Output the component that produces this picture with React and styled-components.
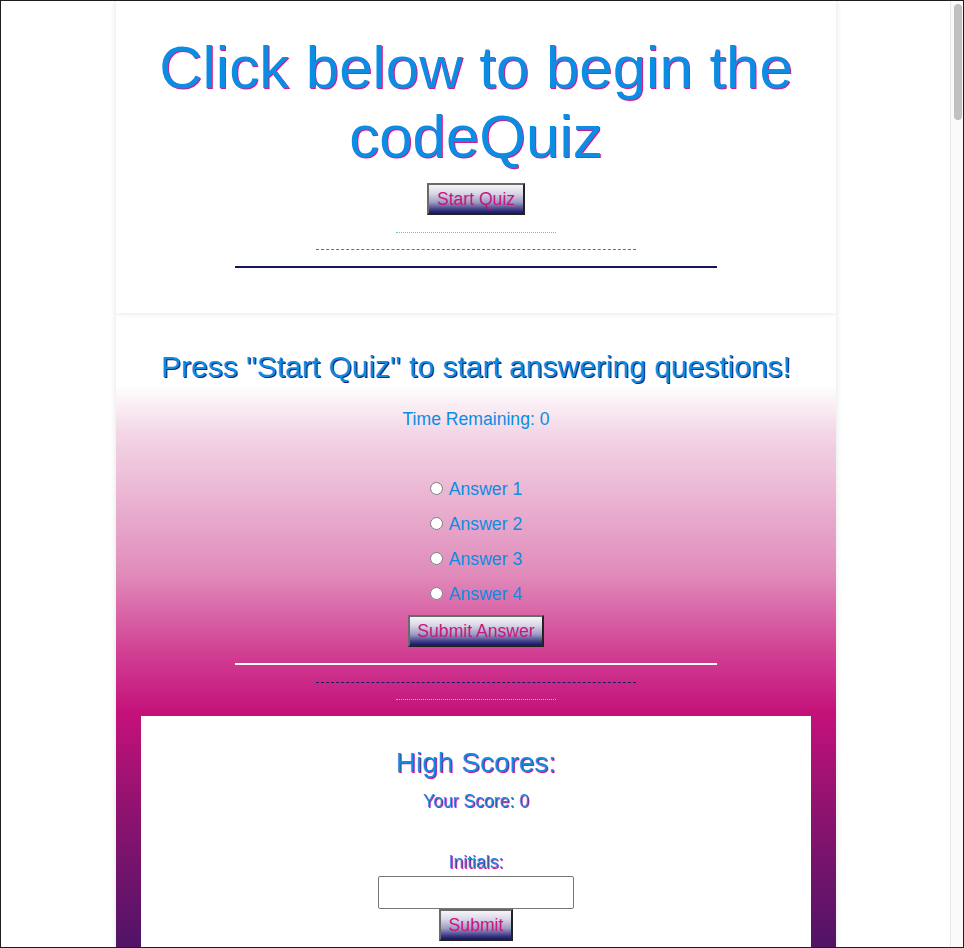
import React from "react";
import styled, { createGlobalStyle } from "styled-components";

const BLUE = "#0a8de2";
const MAGENTA = "#c8157f";

const GlobalStyle = createGlobalStyle`
  html, body {
    margin: 0;
    padding: 0;
    background: #ffffff;
  }
  body {
    font-family: "Liberation Sans", Arial, Helvetica, sans-serif;
    color: ${BLUE};
    padding-right: 12px;
  }
`;

const Frame = styled.div`
  position: fixed;
  inset: 0;
  border: 1px solid #1e1e1e;
  pointer-events: none;
  z-index: 10;
`;

const ScrollTrack = styled.div`
  position: fixed;
  top: 0;
  right: 0;
  bottom: 0;
  width: 13px;
  background: #fafafa;
  border-left: 1px solid #e6e6e6;
  z-index: 9;
`;

const ScrollThumb = styled.div`
  margin: 4px 0 0 3px;
  width: 8px;
  height: 116px;
  border-radius: 4px;
  background: #c1c1c1;
`;

const Page = styled.main`
  width: 720px;
  margin: 0 auto;
`;

const IntroCard = styled.section`
  position: relative;
  z-index: 1;
  background: #ffffff;
  box-shadow: 0 0 6px rgba(0, 0, 0, 0.12);
  padding: 33px 0 45px;
  display: flex;
  flex-direction: column;
  align-items: center;
  text-align: center;
`;

const Title = styled.h1`
  margin: 0;
  font-size: 60px;
  font-weight: normal;
  line-height: 69px;
  color: ${BLUE};
  text-shadow: 1px 1px 0 #d8198c;
`;

const QuizButton = styled.button`
  margin-top: ${(p) => p.$gap ?? 0}px;
  font-family: "Liberation Sans", Arial, Helvetica, sans-serif;
  font-size: 17.6px;
  line-height: 20px;
  color: ${MAGENTA};
  padding: 4px 7.5px;
  border: 2px solid;
  border-color: #6a6a6a #222222 #222222 #6a6a6a;
  border-radius: 0;
  background: linear-gradient(
    to bottom,
    #f6f4f9 0%,
    #d9d7e6 30%,
    #9d9cc3 62%,
    #3c3b86 88%,
    #1a1962 100%
  );
  cursor: pointer;
`;

const Rule = styled.hr`
  width: ${(p) => p.$w}px;
  margin: ${(p) => p.$gap}px auto 0;
  border: 0;
  border-top: ${(p) => p.$thick}px ${(p) => p.$kind} ${(p) => p.$color};
  height: 0;
`;

const QuizCard = styled.section`
  background: linear-gradient(
    to bottom,
    #ffffff 0px,
    #ffffff 72px,
    #f3d6e6 120px,
    #e08cbb 260px,
    #d13f93 340px,
    #c4117a 400px,
    #8d136f 500px,
    #4d1466 640px,
    #4a1465 100%
  );
  box-shadow: 0 0 6px rgba(0, 0, 0, 0.12);
  padding: 36px 25px 0;
  display: flex;
  flex-direction: column;
  align-items: center;
  text-align: center;
`;

const Prompt = styled.h2`
  margin: 0;
  font-size: 30px;
  font-weight: normal;
  line-height: 35px;
  color: ${BLUE};
  text-shadow: 1px 1px 0 #1c1f72;
`;

const Timer = styled.p`
  margin: 25px 0 0;
  font-size: 17.6px;
  line-height: 20px;
`;

const AnswerList = styled.div`
  margin-top: 50px;
  display: flex;
  flex-direction: column;
  align-items: center;
  gap: 15px;
`;

const AnswerRow = styled.label`
  display: flex;
  align-items: center;
  gap: 6px;
  font-size: 17.6px;
  line-height: 20px;
  color: ${BLUE};
  cursor: pointer;
`;

const Radio = styled.input`
  margin: 0 0 2px;
  width: 13px;
  height: 13px;
`;

const ScoresCard = styled.div`
  align-self: stretch;
  margin-top: 16px;
  background: #ffffff;
  padding: 31px 0 60px;
  display: flex;
  flex-direction: column;
  align-items: center;
  text-align: center;
`;

const ScoresTitle = styled.h3`
  margin: 0;
  font-size: 28px;
  font-weight: normal;
  line-height: 32px;
  color: ${BLUE};
  text-shadow: 1px 1px 0 #d8198c;
`;

const ScoreText = styled.p`
  margin: ${(p) => p.$gap}px 0 0;
  font-size: 17.6px;
  line-height: 20px;
  color: ${BLUE};
  text-shadow: 1px 1px 0 #d8198c;
`;

const InitialsInput = styled.input`
  margin-top: 4px;
  box-sizing: border-box;
  width: 196px;
  height: 33px;
  border: 1px solid #767676;
  border-radius: 2px;
  padding: 1px 4px;
  font-family: "Liberation Sans", Arial, sans-serif;
  font-size: 16px;
  background: #ffffff;
`;

const answers = ["Answer 1", "Answer 2", "Answer 3", "Answer 4"];

export default function App() {
  return (
    <>
      <GlobalStyle />
      <Frame />
      <ScrollTrack>
        <ScrollThumb />
      </ScrollTrack>
      <Page>
        <IntroCard>
          <Title>
            Click below to begin the
            <br />
            codeQuiz
          </Title>
          <QuizButton $gap={12}>Start Quiz</QuizButton>
          <Rule $w={160} $gap={17} $thick={1} $kind="dotted" $color="#5bc3dc" />
          <Rule $w={320} $gap={16} $thick={1} $kind="dashed" $color="#e21ee0" />
          <Rule $w={482} $gap={16} $thick={2} $kind="solid" $color="#15155c" />
        </IntroCard>
        <QuizCard>
          <Prompt>Press "Start Quiz" to start answering questions!</Prompt>
          <Timer>Time Remaining: 0</Timer>
          <AnswerList>
            {answers.map((a) => (
              <AnswerRow key={a}>
                <Radio type="radio" name="answer" />
                {a}
              </AnswerRow>
            ))}
          </AnswerList>
          <QuizButton $gap={11}>Submit Answer</QuizButton>
          <Rule $w={482} $gap={16} $thick={2} $kind="solid" $color="#ffffff" />
          <Rule $w={320} $gap={17} $thick={1} $kind="dashed" $color="#1a1d63" />
          <Rule $w={160} $gap={16} $thick={1} $kind="dotted" $color="#eaa6dc" />
          <ScoresCard>
            <ScoresTitle>High Scores:</ScoresTitle>
            <ScoreText $gap={12}>Your Score: 0</ScoreText>
            <ScoreText $gap={41}>Initials:</ScoreText>
            <InitialsInput type="text" />
            <QuizButton $gap={0}>Submit</QuizButton>
          </ScoresCard>
        </QuizCard>
      </Page>
    </>
  );
}
